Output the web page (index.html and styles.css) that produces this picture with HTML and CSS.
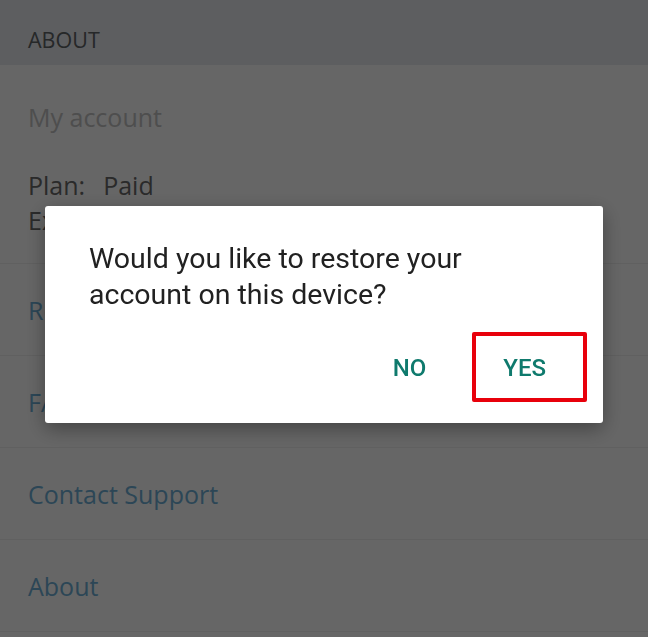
FILE: index.html
```html
<!DOCTYPE html>
<html lang="en">
<head>
    <meta charset="UTF-8">
    <meta name="viewport" content="width=device-width, initial-scale=1.0">
    <title>Settings</title>
    <link rel="stylesheet" href="styles.css">
</head>
<body>
    <div class="section-head">ABOUT</div>

    <div class="account">
        <div class="account-title">My account</div>
        <div class="account-line"><span class="label">Plan:</span>Paid</div>
        <div class="account-line"><span class="label">Expires:</span>Never</div>
    </div>

    <a class="row" href="#">Restore purchases</a>
    <a class="row" href="#">FAQ</a>
    <a class="row" href="#">Contact Support</a>
    <a class="row" href="#">About</a>

    <!-- restore dialog over a dimmed page -->
    <div class="scrim">
        <div class="dialog">
            <p class="dialog-text">Would you like to restore your account on this device?</p>
            <div class="dialog-actions">
                <button class="btn">NO</button>
                <button class="btn btn-marked">YES</button>
            </div>
        </div>
    </div>
</body>
</html>
```

FILE: styles.css
```css
body {
    margin: 0;
    background: #ffffff;
    font-family: "Open Sans", "Liberation Sans", sans-serif;
}

.section-head {
    box-sizing: border-box;
    height: 65px;
    padding: 25px 28px 0;
    background: #e8ebf0;
    color: #5f6466;
    font-size: 21.5px;
}

.account {
    padding: 35px 28px 25px;
    border-bottom: 1px solid #f0f0f0;
    font-size: 25px;
    line-height: 35px;
    color: #6a6a6a;
}

.account-title {
    color: #c3c3c3;
    margin-bottom: 33px;
}

.account-line .label {
    margin-right: 18px;
}

.row {
    display: block;
    padding: 29px 28px 28px;
    line-height: 34px;
    font-size: 25px;
    color: #6eafd7;
    text-decoration: none;
    border-bottom: 1px solid #f0f0f0;
}

/* dialog */
.scrim {
    position: fixed;
    inset: 0;
    background: rgba(0, 0, 0, 0.6);
    display: flex;
    align-items: center;
    justify-content: center;
    padding-bottom: 9px;
}

.dialog {
    width: 558px;
    background: #ffffff;
    border-radius: 3px;
    box-shadow: 0 6px 20px rgba(0, 0, 0, 0.35);
    font-family: Roboto, "Liberation Sans", sans-serif;
}

.dialog-text {
    margin: 0;
    padding: 35px 44px 0;
    font-size: 28.5px;
    line-height: 36px;
    color: #212121;
}

.dialog-actions {
    display: flex;
    justify-content: flex-end;
    gap: 77px;
    padding: 41px 57px 41px 0;
}

.btn {
    position: relative;
    border: 0;
    padding: 0;
    background: none;
    font-family: Roboto, "Liberation Sans", sans-serif;
    font-weight: 500;
    font-size: 24px;
    line-height: 28px;
    color: #0f7a6d;
}

.btn-marked::after {
    content: "";
    position: absolute;
    left: -31px;
    right: -41px;
    top: -22px;
    bottom: -20px;
    border: 4px solid #e8000b;
    border-radius: 2px;
}
```
